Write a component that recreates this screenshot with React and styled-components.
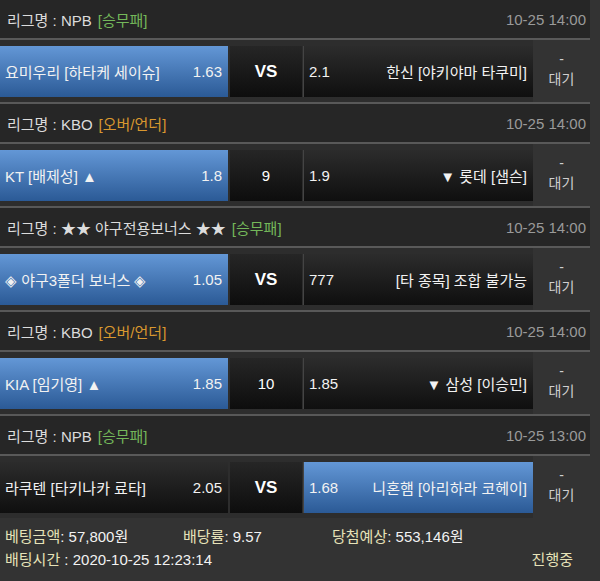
import React from 'react'
import styled, { createGlobalStyle } from 'styled-components'

const GlobalStyle = createGlobalStyle`
  html, body {
    margin: 0;
    padding: 0;
    background: #333333;
  }
  body {
    font-family: "Liberation Sans", "Noto Sans CJK KR", sans-serif;
    color: #eee;
  }
`

const games = [
  {
    league: 'NPB', type: '[승무패]', typeColor: '#74b85a', time: '10-25 14:00',
    home: '요미우리 [하타케 세이슈]', homeOdds: '1.63', mid: 'VS',
    awayOdds: '2.1', away: '한신 [야키야마 타쿠미]', pick: 'home'
  },
  {
    league: 'KBO', type: '[오버/언더]', typeColor: '#d9982f', time: '10-25 14:00',
    home: 'KT [배제성] ▲', homeOdds: '1.8', mid: '9',
    awayOdds: '1.9', away: '▼ 롯데 [샘슨]', pick: 'home'
  },
  {
    league: '★★ 야구전용보너스 ★★', type: '[승무패]', typeColor: '#74b85a', time: '10-25 14:00',
    home: '◈ 야구3폴더 보너스 ◈', homeOdds: '1.05', mid: 'VS',
    awayOdds: '777', away: '[타 종목] 조합 불가능', pick: 'home'
  },
  {
    league: 'KBO', type: '[오버/언더]', typeColor: '#d9982f', time: '10-25 14:00',
    home: 'KIA [임기영] ▲', homeOdds: '1.85', mid: '10',
    awayOdds: '1.85', away: '▼ 삼성 [이승민]', pick: 'home'
  },
  {
    league: 'NPB', type: '[승무패]', typeColor: '#74b85a', time: '10-25 13:00',
    home: '라쿠텐 [타키나카 료타]', homeOdds: '2.05', mid: 'VS',
    awayOdds: '1.68', away: '니혼햄 [아리하라 코헤이]', pick: 'away'
  }
]

const App = () => (
  <Page>
    <GlobalStyle />
    <List>
      {games.map((g, i) => (
        <Block key={i} last={i === games.length - 1}>
          <Header>
            <League>
              리그명 : {g.league}
              <Type color={g.typeColor}>{g.type}</Type>
            </League>
            <Time>{g.time}</Time>
          </Header>
          <RowWrap>
            <BetRow>
              <Pick selected={g.pick === 'home'}>
                <span>{g.home}</span>
                <span>{g.homeOdds}</span>
              </Pick>
              <Mid bold={g.mid === 'VS'}>{g.mid}</Mid>
              <Pick selected={g.pick === 'away'} divider>
                <span>{g.awayOdds}</span>
                <span>{g.away}</span>
              </Pick>
              <Status>
                <span>-</span>
                <span>대기</span>
              </Status>
            </BetRow>
          </RowWrap>
        </Block>
      ))}
    </List>
    <Footer>
      <FooterLine>
        <Field width="178px"><Label>베팅금액</Label>: 57,800원</Field>
        <Field width="149px"><Label>배당률</Label>: 9.57</Field>
        <Field><Label>당첨예상</Label>: 553,146원</Field>
      </FooterLine>
      <FooterLine>
        <Field><Label>배팅시간</Label> : 2020-10-25 12:23:14</Field>
        <Progress>진행중</Progress>
      </FooterLine>
    </Footer>
  </Page>
)

const Page = styled.div`
  width: 600px;
  height: 581px;
  background: #333333;
  overflow: hidden;
`

const List = styled.div`
  width: 590px;
  display: flex;
  flex-direction: column;
`

const Block = styled.div`
  display: flex;
  flex-direction: column;
  border-bottom: ${p => (p.last ? 'none' : '2px solid #585858')};
`

const Header = styled.div`
  height: 38px;
  display: flex;
  align-items: center;
  justify-content: space-between;
  padding: 0 4px 0 7px;
  background: #262626;
  border-bottom: 2px solid #595959;
  font-size: 15px;
`

const League = styled.div`
  color: #dcdcdc;
  display: flex;
  gap: 6px;
`

const Type = styled.span`
  color: ${p => p.color};
`

const Time = styled.div`
  color: #9a9a9a;
  font-size: 15px;
`

const RowWrap = styled.div`
  padding: 6px 0 5px;
  background: #2d2d2d;
`

const BetRow = styled.div`
  height: 51px;
  display: grid;
  grid-template-columns: 228px 72px 229px 1fr;
  column-gap: 2px;
  font-size: 15px;
`

const Pick = styled.div`
  display: flex;
  align-items: center;
  justify-content: space-between;
  padding: 0 6px 0 5px;
  color: #f2f2f2;
  background: ${p => (p.selected
    ? 'linear-gradient(#6397d6, #2b5a96)'
    : 'linear-gradient(#2c2c2c, #0f0f0f)')};
  border-left: ${p => (p.divider ? '1px solid #444' : 'none')};
  margin-left: ${p => (p.divider ? '-1px' : '0')};
`

const Mid = styled.div`
  display: flex;
  align-items: center;
  justify-content: center;
  color: #fff;
  font-weight: ${p => (p.bold ? 700 : 400)};
  font-size: ${p => (p.bold ? '17px' : '15px')};
  background: linear-gradient(#262626, #0d0d0d);
`

const Status = styled.div`
  display: flex;
  flex-direction: column;
  align-items: center;
  justify-content: center;
  color: #cfcfcf;
  font-size: 14px;
  line-height: 20px;
  padding-bottom: 4px;
  background: #333333;
  margin: -6px 0 -5px -2px;
`

const Footer = styled.div`
  padding: 6px 5px 0;
  font-size: 15px;
  color: #f2f2f2;
`

const FooterLine = styled.div`
  height: 23px;
  display: flex;
  align-items: center;
`

const Field = styled.div`
  width: ${p => p.width || 'auto'};
`

const Label = styled.span`
  color: #e6e2b8;
`

const Progress = styled.div`
  margin-left: auto;
  margin-right: 22px;
  color: #e6e2b8;
`

export default App
